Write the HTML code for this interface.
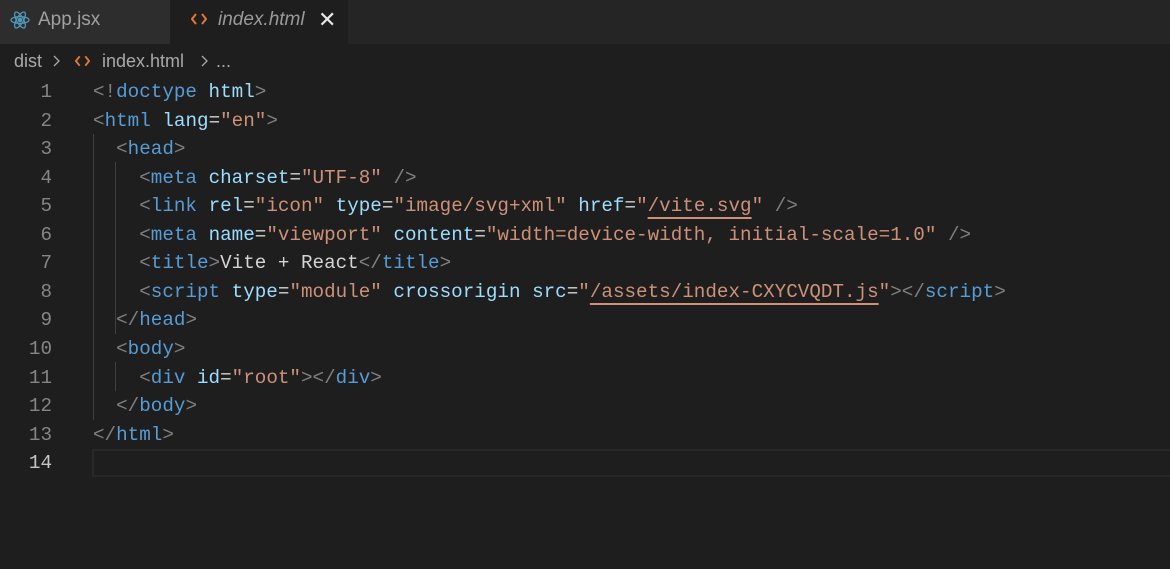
<!DOCTYPE html>
<html><head><meta charset="utf-8"><style>
body{margin:0;width:1170px;height:569px;background:#1e1e1e;overflow:hidden;font-family:"Liberation Sans",sans-serif;position:relative}
.tabs{position:absolute;left:0;top:0;width:1170px;height:44px;background:#252526}
.tab{position:absolute;top:0;height:44px;font-size:19px;line-height:40px}
.t1{left:0;width:170px;background:#2d2d2d;color:#a0a0a0}
.t2{left:170px;width:178px;background:#1e1e1e;color:#9a9a9a;font-style:italic}
.bc{position:absolute;left:0;top:47px;font-size:18px;color:#a9a9a9;line-height:28px;width:400px;height:28px}
.bc span{position:absolute;top:0}
.code{position:absolute;left:0;top:78px;font-family:"Liberation Mono",monospace;font-size:19.25px;line-height:28.55px;white-space:pre}
.ln{position:absolute;left:0;width:52px;text-align:right;color:#858585}
.l{position:absolute;left:93px}
.b{color:#808080}.n{color:#569cd6}.a{color:#9cdcfe}.s{color:#ce9178}.t{color:#d4d4d4}
.u{text-decoration:underline;text-decoration-color:#ce9178;text-underline-offset:6px;text-decoration-thickness:2px}
.g{position:absolute;width:1px;background:#404040}
.cur{position:absolute;left:92px;top:449px;width:1078px;height:24px;border:2px solid #282828;border-right:none}
</style></head><body>
<div class="tabs">
<div class="tab t1"><svg style="position:absolute;left:10px;top:11px" width="20" height="18" viewBox="-10 -9 20 18" fill="none" stroke="#519aba" stroke-width="1.3"><ellipse rx="9" ry="3.4"/><ellipse rx="9" ry="3.4" transform="rotate(60)"/><ellipse rx="9" ry="3.4" transform="rotate(120)"/><circle r="1.6" fill="#519aba"/></svg><span style="position:absolute;left:38px">App.jsx</span></div>
<div class="tab t2"><svg style="position:absolute;left:21px;top:13px" width="16" height="12" viewBox="0 0 16 12" fill="none" stroke="#e37933" stroke-width="2"><path d="M5 1L1 6l4 5M11 1l4 5-4 5"/></svg><span style="position:absolute;left:48px">index.html</span><span style="position:absolute;left:148px;color:#e8e8e8;font-style:normal;font-size:22px">✕</span></div>
</div>
<div class="bc"><span style="left:14px">dist</span>
<svg style="position:absolute;left:51px;top:7px" width="10" height="14" viewBox="0 0 10 14" fill="none" stroke="#a9a9a9" stroke-width="1.3"><path d="M3 2l5 5-5 5"/></svg>
<svg style="position:absolute;left:75px;top:8px" width="15" height="12" viewBox="0 0 16 12" fill="none" stroke="#e37933" stroke-width="2"><path d="M5 1L1 6l4 5M11 1l4 5-4 5"/></svg>
<span style="left:102px">index.html</span>
<svg style="position:absolute;left:199px;top:7px" width="10" height="14" viewBox="0 0 10 14" fill="none" stroke="#a9a9a9" stroke-width="1.3"><path d="M3 2l5 5-5 5"/></svg>
<span style="left:216px">...</span></div>
<div class="g" style="left:93px;top:134px;height:286px"></div>
<div class="g" style="left:115px;top:162px;height:172px"></div>
<div class="g" style="left:115px;top:362px;height:29px"></div>
<div class="cur"></div>
<div class="code">
<div class="ln" style="top:0">1</div><div class="l" style="top:0"><span class="b">&lt;!</span><span class="n">doctype</span> <span class="a">html</span><span class="b">&gt;</span></div>
<div class="ln" style="top:28.55px">2</div><div class="l" style="top:28.55px"><span class="b">&lt;</span><span class="n">html</span> <span class="a">lang</span><span class="t">=</span><span class="s">"en"</span><span class="b">&gt;</span></div>
<div class="ln" style="top:57.1px">3</div><div class="l" style="top:57.1px">  <span class="b">&lt;</span><span class="n">head</span><span class="b">&gt;</span></div>
<div class="ln" style="top:85.65px">4</div><div class="l" style="top:85.65px">    <span class="b">&lt;</span><span class="n">meta</span> <span class="a">charset</span><span class="t">=</span><span class="s">"UTF-8"</span> <span class="b">/&gt;</span></div>
<div class="ln" style="top:114.2px">5</div><div class="l" style="top:114.2px">    <span class="b">&lt;</span><span class="n">link</span> <span class="a">rel</span><span class="t">=</span><span class="s">"icon"</span> <span class="a">type</span><span class="t">=</span><span class="s">"image/svg+xml"</span> <span class="a">href</span><span class="t">=</span><span class="s">"<span class="u">/vite.svg</span>"</span> <span class="b">/&gt;</span></div>
<div class="ln" style="top:142.75px">6</div><div class="l" style="top:142.75px">    <span class="b">&lt;</span><span class="n">meta</span> <span class="a">name</span><span class="t">=</span><span class="s">"viewport"</span> <span class="a">content</span><span class="t">=</span><span class="s">"width=device-width, initial-scale=1.0"</span> <span class="b">/&gt;</span></div>
<div class="ln" style="top:171.3px">7</div><div class="l" style="top:171.3px">    <span class="b">&lt;</span><span class="n">title</span><span class="b">&gt;</span><span class="t">Vite + React</span><span class="b">&lt;/</span><span class="n">title</span><span class="b">&gt;</span></div>
<div class="ln" style="top:199.85px">8</div><div class="l" style="top:199.85px">    <span class="b">&lt;</span><span class="n">script</span> <span class="a">type</span><span class="t">=</span><span class="s">"module"</span> <span class="a">crossorigin</span> <span class="a">src</span><span class="t">=</span><span class="s">"<span class="u">/assets/index-CXYCVQDT.js</span>"</span><span class="b">&gt;&lt;/</span><span class="n">script</span><span class="b">&gt;</span></div>
<div class="ln" style="top:228.4px">9</div><div class="l" style="top:228.4px">  <span class="b">&lt;/</span><span class="n">head</span><span class="b">&gt;</span></div>
<div class="ln" style="top:256.95px">10</div><div class="l" style="top:256.95px">  <span class="b">&lt;</span><span class="n">body</span><span class="b">&gt;</span></div>
<div class="ln" style="top:285.5px">11</div><div class="l" style="top:285.5px">    <span class="b">&lt;</span><span class="n">div</span> <span class="a">id</span><span class="t">=</span><span class="s">"root"</span><span class="b">&gt;&lt;/</span><span class="n">div</span><span class="b">&gt;</span></div>
<div class="ln" style="top:314.05px">12</div><div class="l" style="top:314.05px">  <span class="b">&lt;/</span><span class="n">body</span><span class="b">&gt;</span></div>
<div class="ln" style="top:342.6px">13</div><div class="l" style="top:342.6px"><span class="b">&lt;/</span><span class="n">html</span><span class="b">&gt;</span></div>
<div class="ln" style="top:371.15px;color:#c6c6c6">14</div>
</div>
</body></html>
